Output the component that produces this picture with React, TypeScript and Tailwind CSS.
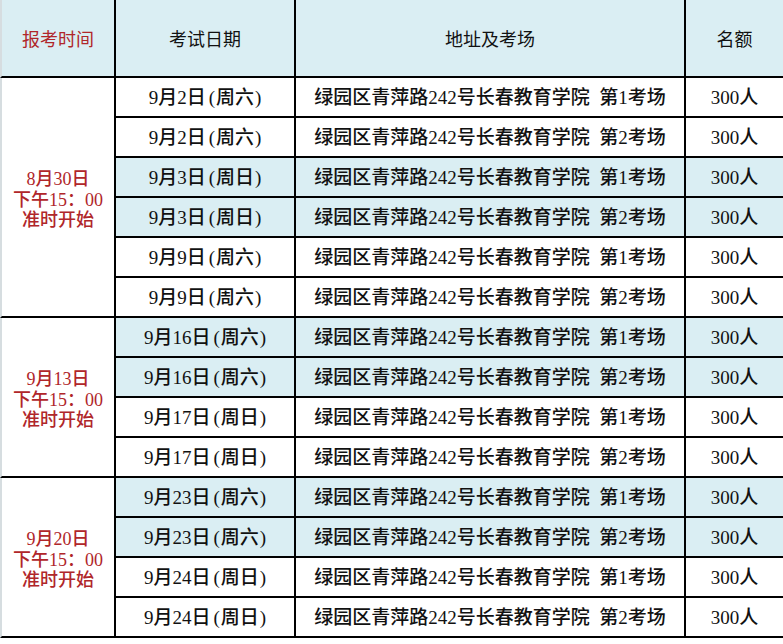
const groups = [
  {
    date: "8月30日",
    rows: [
      { day: "9月2日", week: "周六", room: "第1考场", blue: false },
      { day: "9月2日", week: "周六", room: "第2考场", blue: false },
      { day: "9月3日", week: "周日", room: "第1考场", blue: true },
      { day: "9月3日", week: "周日", room: "第2考场", blue: true },
      { day: "9月9日", week: "周六", room: "第1考场", blue: false },
      { day: "9月9日", week: "周六", room: "第2考场", blue: false },
    ],
  },
  {
    date: "9月13日",
    rows: [
      { day: "9月16日", week: "周六", room: "第1考场", blue: true },
      { day: "9月16日", week: "周六", room: "第2考场", blue: true },
      { day: "9月17日", week: "周日", room: "第1考场", blue: false },
      { day: "9月17日", week: "周日", room: "第2考场", blue: false },
    ],
  },
  {
    date: "9月20日",
    rows: [
      { day: "9月23日", week: "周六", room: "第1考场", blue: true },
      { day: "9月23日", week: "周六", room: "第2考场", blue: true },
      { day: "9月24日", week: "周日", room: "第1考场", blue: false },
      { day: "9月24日", week: "周日", room: "第2考场", blue: false },
    ],
  },
];

const bodyFont = "font-['Liberation_Serif','Noto_Sans_CJK_SC',serif] font-medium";
const headFont = "font-['Noto_Sans_CJK_SC',sans-serif]";

const App = () => {
  return (
    <div className="w-[783px] h-[644px] bg-white overflow-hidden">
      <div className="grid grid-cols-[116px_180px_390px_97px] grid-rows-[78px_repeat(14,40px)] text-[19px] text-[#111]">
        {/* Header */}
        <div className={`flex items-center justify-center bg-[#daeef3] border-l-2 border-l-[#d6dde0] border-r-2 border-b-2 border-r-black border-b-black text-[#b0262a] text-[18px] ${headFont}`}>
          报考时间
        </div>
        <div className={`flex items-center justify-center bg-[#daeef3] border-r-2 border-b-2 border-black text-[18px] ${headFont}`}>
          考试日期
        </div>
        <div className={`flex items-center justify-center bg-[#daeef3] border-r-2 border-b-2 border-black text-[18px] ${headFont}`}>
          地址及考场
        </div>
        <div className={`flex items-center justify-center bg-[#daeef3] border-b-2 border-black text-[18px] ${headFont}`}>
          名额
        </div>

        {groups.map((g) =>
          g.rows.map((r, i) => (
            <>
              {i === 0 && (
                <div
                  key={g.date}
                  className={`${g.rows.length === 6 ? "row-span-6" : "row-span-4"} flex flex-col items-center justify-center pt-[6px] bg-white border-l-2 border-l-[#d6dde0] border-r-2 border-b-2 border-r-black border-b-black text-[#b0262a] text-[18px] leading-[20.5px] ${bodyFont}`}
                >
                  <span>{g.date}</span>
                  <span>下午15：00</span>
                  <span>准时开始</span>
                </div>
              )}
              <div className={`flex items-center justify-center pt-[3px] border-r-2 border-b-2 border-black ${r.blue ? "bg-[#daeef3]" : "bg-white"} ${bodyFont}`}>
                {r.day}
                <span className="pl-[3px] pr-[1px]">(</span>
                {r.week}
                <span className="pl-[1px]">)</span>
              </div>
              <div className={`flex items-center justify-center pt-[3px] border-r-2 border-b-2 border-black whitespace-pre ${r.blue ? "bg-[#daeef3]" : "bg-white"} ${bodyFont}`}>
                {"绿园区青萍路242号长春教育学院  " + r.room}
              </div>
              <div className={`flex items-center justify-center pt-[3px] border-b-2 border-black ${r.blue ? "bg-[#daeef3]" : "bg-white"} ${bodyFont}`}>
                300人
              </div>
            </>
          ))
        )}
      </div>
    </div>
  );
};

export default App;
